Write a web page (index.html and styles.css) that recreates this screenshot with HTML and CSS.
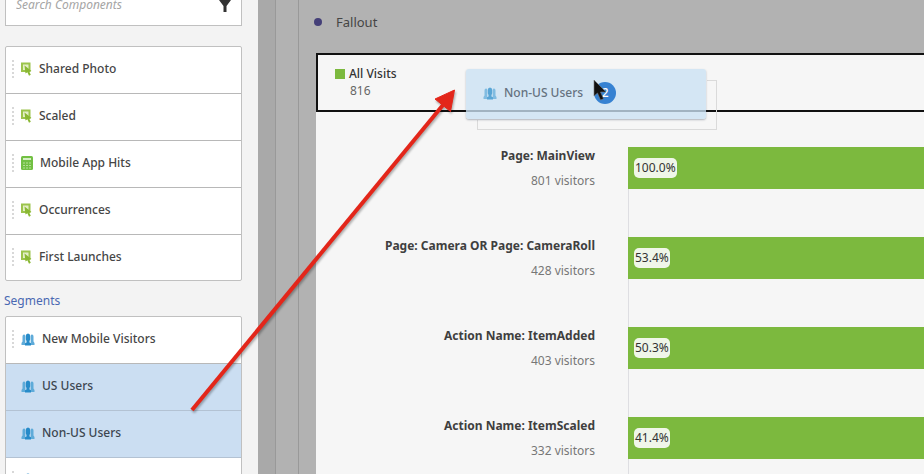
FILE: index.html
```html
<!DOCTYPE html>
<html lang="en">
<head>
<meta charset="utf-8">
<title>Fallout</title>
<link rel="stylesheet" href="styles.css">
</head>
<body>
<svg class="defs" aria-hidden="true">
  <symbol id="metric" viewBox="0 0 11 14">
    <path d="M1 1.500h7.500V9H1z" fill="#e3efc6" stroke="#9cc44c" stroke-width="2"/>
    <path d="M3.500 3.500l7 5.500-2.300.5 1.600 3.300-1.800.9-1.600-3.500-1.900 1.300z" fill="#8ab833"/>
  </symbol>
  <symbol id="calc" viewBox="0 0 12 14">
    <rect width="12" height="14" rx="1.500" fill="#72c043"/>
    <path d="M2 3h8" stroke="#d5efc4" stroke-width="2"/>
    <path d="M2 7h2M5 7h2M8 7h2M2 9.500h2M5 9.500h2M8 9.500h2M2 12h2M5 12h2M8 12h2" stroke="#b4e096" stroke-width="1"/>
  </symbol>
  <symbol id="people" viewBox="0 0 14 13">
    <path d="M.5 12v-2l1-1.500V3.500Q1.500 1.500 3 1.500q1 0 1.300 1V12zM13.500 12v-2l-1-1.500V3.500Q12.500 1.500 11 1.500q-1 0-1.300 1V12z" fill="#5fabd9"/>
    <path d="M7 .5q2.200 0 2.200 2.500v3.500L8.500 8v1.500l1.500.8V12.500H4v-2.200l1.500-.8V8l-.7-1.500V3Q4.800.5 7 .5z" fill="#278bc9"/>
  </symbol>
</svg>
<div class="app">
  <aside class="sidebar">
    <div class="search">
      <input type="search" placeholder="Search Components" aria-label="Search Components">
      <svg class="filter" viewBox="0 0 12 14" aria-hidden="true"><path d="M0 0h12v2L7.500 8v6h-3V8L0 2z" fill="#333"/></svg>
    </div>
    <ul class="list">
      <li><span class="grip"></span><svg class="metric"><use href="#metric"/></svg>Shared Photo</li>
      <li><span class="grip"></span><svg class="metric"><use href="#metric"/></svg>Scaled</li>
      <li><span class="grip"></span><svg class="calc"><use href="#calc"/></svg>Mobile App Hits</li>
      <li><span class="grip"></span><svg class="metric"><use href="#metric"/></svg>Occurrences</li>
      <li><span class="grip"></span><svg class="metric"><use href="#metric"/></svg>First Launches</li>
    </ul>
    <h2><a href="#segments">Segments</a></h2>
    <ul class="list" id="segments">
      <li><span class="grip"></span><svg class="people"><use href="#people"/></svg>New Mobile Visitors</li>
      <li class="selected"><span class="grip"></span><svg class="people"><use href="#people"/></svg>US Users</li>
      <li class="selected"><span class="grip"></span><svg class="people"><use href="#people"/></svg>Non-US Users</li>
      <li><span class="grip"></span><svg class="people"><use href="#people"/></svg>Android Users</li>
    </ul>
  </aside>
  <div class="gutter"></div>
  <main>
    <h1>Fallout</h1>
    <section class="panel">
      <div class="dropzone">
        <div class="legend"><span class="swatch"></span>All Visits</div>
        <div class="total">816</div>
      </div>
      <div class="steps">
        <div class="step"><div class="label"><b>Page: MainView</b><span>801 visitors</span></div><div class="track"><div class="bar"><span>100.0%</span></div></div></div>
        <div class="step"><div class="label"><b>Page: Camera OR Page: CameraRoll</b><span>428 visitors</span></div><div class="track"><div class="bar"><span>53.4%</span></div></div></div>
        <div class="step"><div class="label"><b>Action Name: ItemAdded</b><span>403 visitors</span></div><div class="track"><div class="bar"><span>50.3%</span></div></div></div>
        <div class="step"><div class="label"><b>Action Name: ItemScaled</b><span>332 visitors</span></div><div class="track"><div class="bar"><span>41.4%</span></div></div></div>
      </div>
    </section>
  </main>
</div>
<div class="ghost-back"></div>
<div class="ghost"><svg class="people"><use href="#people"/></svg>Non-US Users<span class="count">2</span></div>
<svg class="cursor" viewBox="0 0 14 22" aria-hidden="true"><path d="M1 1v16l3.500-3 3 7 3-1.300-3-6.700H13z" fill="#111" stroke="#777" stroke-width=".6"/></svg>
<svg class="arrow" viewBox="0 0 280 340" aria-hidden="true">
  <path d="M12 330L263 25" stroke="#e3261a" stroke-width="4"/>
  <path d="M274.500 10L255 19l15.500 12.500z" fill="#e3261a" stroke="#e3261a"/>
</svg>
</body>
</html>
```
FILE: styles.css
```css
* { box-sizing: border-box; }

body {
  margin: 0;
  overflow: hidden;
  background: #b2b2b2;
  color: #454545;
  font: 12px/18px "Noto Sans", "Open Sans", sans-serif;
}

.defs { position: absolute; width: 0; height: 0; }

.app { display: flex; height: 100vh; overflow: hidden; }

.sidebar {
  flex: 0 0 258px;
  padding: 0 16px 0 5px;
  background: #f3f3f3;
}

.search {
  display: flex;
  align-items: center;
  height: 41px;
  margin: -15px 0 20px;
  padding: 0 10px 2px;
  border: 1px solid #c0c0c0;
  background: #fff;
}

.search input {
  flex: 1;
  min-width: 0;
  padding: 0;
  border: 0;
  outline: 0;
  background: none;
  font: italic 12px/18px "Noto Sans", "Open Sans", sans-serif;
}

.search input::placeholder { color: #a5a5a5; opacity: 1; }

.filter { width: 12px; height: 14px; }

.list {
  margin: 0;
  padding: 0;
  list-style: none;
  border: 1px solid #c0c0c0;
  border-radius: 2px;
  background: #fff;
  font-weight: 500;
}

.list li {
  display: flex;
  align-items: center;
  gap: 7px;
  height: 47px;
  padding: 0 0 2px 6px;
  border-bottom: 1px solid #b8b8b8;
}

.list li:last-child { height: 45px; border-bottom: 0; }

.list .selected { background: #cbdef2; border-color: #b3c2d3; color: #3c4650; }

.grip {
  width: 2px;
  height: 18px;
  background: repeating-linear-gradient(#d8d8d8 0 2px, transparent 2px 4px);
}

.selected .grip { visibility: hidden; }

.metric { width: 11px; height: 14px; }
.calc { width: 12px; height: 14px; }
.people { width: 14px; height: 13px; }

h2 {
  margin: 11px 0 6px -1px;
  font-size: 12px;
  font-weight: 400;
  line-height: 18px;
}

h2 a { color: #4a68b2; text-decoration: none; }

.gutter {
  flex: 0 0 41px;
  border-right: 1px solid #999;
  background: linear-gradient(90deg, #a9a9a9 0 17px, #999 17px 18px, #b2b2b2 18px);
}

main { flex: 1; min-width: 0; padding-left: 17px; }

h1 {
  display: flex;
  align-items: center;
  gap: 14px;
  margin: 13px 0 22px -2px;
  font-size: 13px;
  font-weight: 400;
  line-height: 18px;
}

h1::before {
  width: 8px;
  height: 8px;
  border-radius: 50%;
  background: #443f78;
  content: "";
}

.panel { height: 100vh; background: #f6f6f6; }

.dropzone {
  height: 59px;
  padding: 10px 17px;
  border: 2px solid #111;
  border-right: 0;
  line-height: 17px;
}

.legend { display: flex; align-items: center; gap: 4px; color: #333; font-weight: 500; }
.swatch { width: 10px; height: 10px; background: #7cb93e; }
.total { padding-left: 15px; color: #666; }

.steps { padding-top: 35px; }

.step { display: flex; height: 90px; }

.label {
  flex: 0 0 312px;
  padding-right: 33px;
  text-align: right;
}

.label b { display: block; margin-bottom: 7px; color: #3f3f3f; }
.label span { color: #777; }

.track { flex: 1; border-left: 1px solid #dedee2; }

.bar {
  display: flex;
  align-items: center;
  height: 42px;
  margin-left: -1px;
  padding-left: 6px;
  background: #7cb93e;
}

.bar span {
  padding: 1px;
  border-radius: 5px;
  background: #f0f6e9;
  color: #333;
}

.ghost-back, .ghost {
  position: absolute;
  width: 240px;
  height: 50px;
}

/* Only the part that sticks out from under the dragged card shows. */
.ghost-back {
  left: 477px;
  top: 80px;
  border: 1px solid #dadada;
  clip-path: polygon(230px 0, 100% 0, 100% 100%, 0 100%, 0 40px, 230px 40px);
}

.ghost {
  left: 466px;
  top: 69px;
  display: flex;
  align-items: center;
  gap: 7px;
  padding: 0 0 2px 17px;
  border-radius: 3px;
  background: rgba(203, 225, 244, .78);
  box-shadow: 0 1px 2px rgba(70, 80, 100, .4);
  color: #65727f;
  font-weight: 500;
}

.ghost .people { opacity: .7; }

.count {
  width: 22px;
  height: 22px;
  margin-left: 4px;
  border-radius: 50%;
  background: #3682d2;
  color: #fff;
  line-height: 22px;
  text-align: center;
}

.cursor { position: absolute; left: 593px; top: 79px; width: 14px; height: 22px; }

.arrow {
  position: absolute;
  left: 180px;
  top: 80px;
  width: 280px;
  height: 340px;
  filter: drop-shadow(1px 2px 1px rgba(0, 0, 0, .3));
}
```
